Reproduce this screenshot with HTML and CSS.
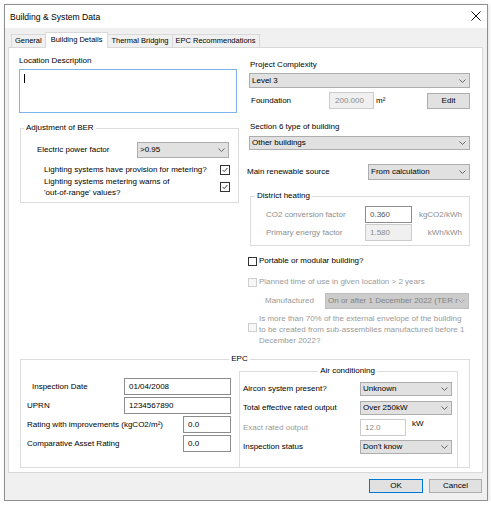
FILE: index.html
```html
<!DOCTYPE html>
<html lang="en">
<head>
<meta charset="UTF-8">
<title>Building &amp; System Data</title>
<link rel="stylesheet" href="styles.css">
</head>
<body>

<div class="dialog">
  <div class="titlebar">
    <span class="title">Building &amp; System Data</span>
    <svg class="close" viewBox="0 0 10 10"><path d="M0.5 0.5 L9.5 9.5 M9.5 0.5 L0.5 9.5"/></svg>
  </div>

  <div class="dialog-body">
    <ul class="tabs">
      <li class="tab">General</li>
      <li class="tab active">Building Details</li>
      <li class="tab">Thermal Bridging</li>
      <li class="tab">EPC Recommendations</li>
    </ul>

    <div class="panel">
      <div class="columns">

        <!-- left column -->
        <div class="col">
          <div class="caption">Location Description</div>
          <div class="memo"><span class="caret"></span></div>

          <fieldset class="group group-ber">
            <legend>Adjustment of BER</legend>
            <div class="ber-row">
              <span>Electric power factor</span>
              <div class="select select-power">
                <span>&gt;0.95</span>
                <svg class="chev" viewBox="0 0 7 4"><path d="M0.5 0.5 L3.5 3.5 L6.5 0.5"/></svg>
              </div>
            </div>
            <div class="ber-check">
              <span>Lighting systems have provision for metering?</span>
              <span class="check"><svg viewBox="0 0 10 10"><path d="M2 5 L4 7 L8 2.5"/></svg></span>
            </div>
            <div class="ber-check ber-check-2">
              <span>Lighting systems metering warns of<br>'out-of-range' values?</span>
              <span class="check"><svg viewBox="0 0 10 10"><path d="M2 5 L4 7 L8 2.5"/></svg></span>
            </div>
          </fieldset>
        </div>

        <!-- right column -->
        <div class="col">
          <div class="caption caption-first">Project Complexity</div>
          <div class="select select-wide">
            <span>Level 3</span>
            <svg class="chev" viewBox="0 0 7 4"><path d="M0.5 0.5 L3.5 3.5 L6.5 0.5"/></svg>
          </div>

          <div class="foundation">
            <span class="foundation-label">Foundation</span>
            <span class="field field-disabled field-area">200.000</span>
            <span class="unit-m2">m²</span>
            <span class="btn btn-edit">Edit</span>
          </div>

          <div class="caption caption-section">Section 6 type of building</div>
          <div class="select select-wide select-short">
            <span>Other buildings</span>
            <svg class="chev" viewBox="0 0 7 4"><path d="M0.5 0.5 L3.5 3.5 L6.5 0.5"/></svg>
          </div>

          <div class="renewable">
            <span class="renewable-label">Main renewable source</span>
            <div class="select select-renewable">
              <span>From calculation</span>
              <svg class="chev" viewBox="0 0 7 4"><path d="M0.5 0.5 L3.5 3.5 L6.5 0.5"/></svg>
            </div>
          </div>

          <fieldset class="group group-district">
            <legend>District heating</legend>
            <div class="factor-row">
              <span class="factor-label">CO2 conversion factor</span>
              <span class="field field-factor">0.360</span>
              <span class="factor-unit">kgCO2/kWh</span>
            </div>
            <div class="factor-row factor-row-2">
              <span class="factor-label">Primary energy factor</span>
              <span class="field field-factor field-disabled">1.580</span>
              <span class="factor-unit">kWh/kWh</span>
            </div>
          </fieldset>

          <div class="opt opt-portable">
            <span class="check check-sm"></span>
            <span>Portable or modular building?</span>
          </div>

          <div class="opt opt-planned is-disabled">
            <span class="check check-sm"></span>
            <span>Planned time of use in given location &gt; 2 years</span>
          </div>

          <div class="manufactured is-disabled">
            <span class="manufactured-label">Manufactured</span>
            <div class="select select-disabled select-manufactured">
              <span>On or after 1 December 2022 (TER r</span>
              <svg class="chev" viewBox="0 0 7 4"><path d="M0.5 0.5 L3.5 3.5 L6.5 0.5"/></svg>
            </div>
          </div>

          <div class="opt opt-envelope is-disabled">
            <span class="check check-sm"></span>
            <span>Is more than 70% of the external envelope of the building<br>to be created from sub-assemblies manufactured before 1<br>December 2022?</span>
          </div>
        </div>
      </div>

      <fieldset class="group group-epc">
        <legend>EPC</legend>
        <div class="epc-inner">
          <div class="epc-left">
            <div class="epc-row">
              <span class="epc-label-date">Inspection Date</span>
              <span class="field field-long">01/04/2008</span>
            </div>
            <div class="epc-row">
              <span>UPRN</span>
              <span class="field field-long">1234567890</span>
            </div>
            <div class="epc-row">
              <span>Rating with improvements (kgCO2/m²)</span>
              <span class="field field-short">0.0</span>
            </div>
            <div class="epc-row">
              <span>Comparative Asset Rating</span>
              <span class="field field-short">0.0</span>
            </div>
          </div>

          <fieldset class="group group-aircon">
            <legend>Air conditioning</legend>
            <div class="ac-row">
              <span class="ac-label">Aircon system present?</span>
              <div class="select select-ac">
                <span>Unknown</span>
                <svg class="chev" viewBox="0 0 7 4"><path d="M0.5 0.5 L3.5 3.5 L6.5 0.5"/></svg>
              </div>
            </div>
            <div class="ac-row ac-row-2">
              <span class="ac-label">Total effective rated output</span>
              <div class="select select-ac">
                <span>Over 250kW</span>
                <svg class="chev" viewBox="0 0 7 4"><path d="M0.5 0.5 L3.5 3.5 L6.5 0.5"/></svg>
              </div>
            </div>
            <div class="ac-row ac-row-exact is-disabled">
              <span class="ac-label">Exact rated output</span>
              <span class="field field-kw">12.0</span>
              <span class="kw">kW</span>
            </div>
            <div class="ac-row ac-row-4">
              <span class="ac-label">Inspection status</span>
              <div class="select select-ac">
                <span>Don't know</span>
                <svg class="chev" viewBox="0 0 7 4"><path d="M0.5 0.5 L3.5 3.5 L6.5 0.5"/></svg>
              </div>
            </div>
          </fieldset>
        </div>
      </fieldset>
    </div>

    <div class="buttons">
      <span class="btn btn-ok">OK</span>
      <span class="btn btn-cancel">Cancel</span>
    </div>
  </div>
</div>

</body>
</html>
```

FILE: styles.css
```css
body {
  margin: 0;
  background: #fff;
  font-family: "Liberation Sans", Arial, sans-serif;
  font-size: 8px;
  line-height: 10px;
  color: #000;
}

/* window frame */
.dialog {
  width: 484px;
  height: 497px;
  margin: 4px 0 0 4px;
  box-sizing: border-box;
  border: 1px solid #8f8f8f;
  box-shadow: 1px 1px 4px rgba(0,0,0,0.12);
  display: flex;
  flex-direction: column;
}

.titlebar {
  height: 23px;
  flex: none;
  background: #fff;
  display: flex;
  align-items: center;
  justify-content: space-between;
  padding: 0 6px 0 5px;
}
.title {
  font-size: 8.6px;
}
.close {
  width: 10px;
  height: 10px;
  margin-top: -2px;
  fill: none;
  stroke: #111;
  stroke-width: 1;
}

.dialog-body {
  flex: 1;
  background: #f0f0f0;
  padding: 4px 4px 0 3px;
  display: flex;
  flex-direction: column;
}

/* tab strip */
.tabs {
  list-style: none;
  margin: 0;
  padding: 0 0 0 3px;
  height: 15px;
  display: flex;
  align-items: flex-end;
  font-size: 7.5px;
}
.tab {
  box-sizing: border-box;
  height: 13px;
  line-height: 12px;
  padding: 0 3px;
  border: 1px solid #d9d9d9;
  border-bottom: 0;
  background: #f0f0f0;
  margin-left: -1px;
  white-space: nowrap;
}
.tab:first-child {
  margin-left: 0;
}
.tab.active {
  position: relative;
  height: 16px;
  line-height: 14px;
  margin-bottom: -1px;
  padding: 0 5px;
  background: #fff;
}

.panel {
  background: #fff;
  border: 1px solid #d9d9d9;
  padding: 8px 12px 4px 10px;
}

.columns {
  display: grid;
  grid-template-columns: 220px 221px;
  column-gap: 10px;
  align-items: start;
}
.col {
  display: flex;
  flex-direction: column;
}

/* shared controls */
.select {
  box-sizing: border-box;
  height: 16px;
  display: flex;
  align-items: center;
  justify-content: space-between;
  padding: 0 3px 0 2px;
  background: #e1e1e1;
  border: 1px solid #adadad;
  white-space: nowrap;
  overflow: hidden;
}
.chev {
  width: 7px;
  height: 4px;
  flex: none;
  fill: none;
  stroke: #666;
  stroke-width: 1;
}
.select-disabled {
  background: #cccccc;
  border-color: #bfbfbf;
  color: #838383;
}
.select-disabled .chev {
  stroke: #a8a8a8;
}

.field {
  box-sizing: border-box;
  height: 17px;
  display: flex;
  align-items: center;
  padding: 0 4px;
  background: #fff;
  border: 1px solid #8c8c8c;
  flex: none;
}
.field-disabled {
  background: #f0f0f0;
  border-color: #cccccc;
  color: #8a8a8a;
}

.check {
  box-sizing: border-box;
  width: 10px;
  height: 10px;
  flex: none;
  border: 1px solid #333;
  background: #fff;
  display: flex;
}
.check svg {
  width: 100%;
  height: 100%;
  fill: none;
  stroke: #222;
  stroke-width: 1.1;
}
.check-sm {
  width: 9px;
  height: 9px;
}

.btn {
  box-sizing: border-box;
  height: 14px;
  display: flex;
  align-items: center;
  justify-content: center;
  background: #e1e1e1;
  border: 1px solid #adadad;
}

.group {
  margin: 0;
  min-width: 0;
  padding: 0;
  border: 1px solid #dcdcdc;
}
.group legend {
  padding: 0 2px;
  line-height: 10px;
}

.is-disabled {
  color: #9a9a9a;
}
.is-disabled .check {
  border-color: #cfcfcf;
  background: #f7f7f7;
}

/* left column */
.memo {
  box-sizing: border-box;
  width: 218px;
  height: 44px;
  margin-top: 3px;
  padding: 4px 0 0 4px;
  border: 1px solid #7eb4ea;
  background: #fff;
}
.caret {
  display: block;
  width: 1px;
  height: 9px;
  background: #000;
}

.group-ber {
  margin: 10px 0 0 1px;
  padding: 0 9px 4px 3px;
}
.ber-row {
  height: 16px;
  margin-top: 9px;
  padding-left: 13px;
  display: flex;
  align-items: center;
  justify-content: space-between;
}
.select-power {
  width: 92px;
}
.ber-check {
  margin-top: 6px;
  padding-left: 20px;
  line-height: 11px;
  display: flex;
  align-items: center;
  justify-content: space-between;
}
.ber-check .check {
  margin-right: -1px;
}
.ber-check-2 {
  margin-top: 1px;
}

/* right column */
.caption-first {
  margin-top: 4px;
  padding-left: 1px;
}
.select-wide {
  height: 15px;
  margin-top: 3px;
}
.foundation {
  height: 17px;
  margin-top: 4px;
  display: flex;
  align-items: center;
}
.foundation-label {
  width: 78px;
  padding-left: 2px;
}
.field-area {
  width: 45px;
  padding-left: 5px;
}
.unit-m2 {
  margin-left: 2px;
}
.btn-edit {
  width: 43px;
  height: 16px;
  margin-left: auto;
}
.caption-section {
  margin-top: 13px;
  padding-left: 1px;
}
.select-short {
  height: 14px;
  margin-top: 4px;
}
.renewable {
  height: 16px;
  margin-top: 14px;
  display: flex;
  align-items: center;
  justify-content: space-between;
}
.renewable-label {
  margin-left: -2px;
}
.select-renewable {
  width: 102px;
}

.group-district {
  margin: 11px 0 0 1px;
  padding: 0 0 4px 4px;
}
.factor-row {
  margin-top: 5px;
  padding-left: 11px;
  display: flex;
  align-items: center;
  color: #8d8d8d;
}
.factor-row-2 {
  margin-top: 1px;
}
.factor-label {
  width: 99px;
}
.field-factor {
  width: 47px;
  color: #555;
}
.field-factor.field-disabled {
  color: #8a8a8a;
}
.factor-unit {
  width: 44px;
  margin-left: 6px;
  text-align: right;
}

.opt {
  display: flex;
  align-items: center;
  gap: 2px;
  margin-left: -1px;
  white-space: nowrap;
}
.opt-portable {
  margin-top: 10px;
}
.opt-planned {
  margin-top: 11px;
}
.opt-envelope {
  margin-top: 4px;
  line-height: 11px;
  align-items: flex-start;
}
.opt-envelope .check {
  margin-top: 10px;
}

.manufactured {
  height: 16px;
  margin-top: 6px;
  padding-left: 16px;
  display: flex;
  align-items: center;
}
.manufactured-label {
  width: 60px;
}
.select-manufactured {
  width: 144px;
}

/* EPC block */
.group-epc {
  margin: 8px 0 0 1px;
  padding: 0 11px 0 0;
}
.group-epc > legend,
.group-aircon > legend {
  margin: 0 auto;
}
.epc-inner {
  display: flex;
}
.epc-left {
  width: 218px;
  margin-top: 14px;
  padding: 0 8px 0 6px;
  box-sizing: border-box;
}
.epc-row {
  height: 17px;
  margin-bottom: 2px;
  display: flex;
  align-items: center;
  justify-content: space-between;
  white-space: nowrap;
}
.epc-label-date {
  padding-left: 5px;
}
.field-long {
  width: 107px;
}
.field-short {
  width: 48px;
}

.group-aircon {
  width: 219px;
  box-sizing: border-box;
  margin-top: 2px;
  padding: 0 5px 13px 3px;
  border-bottom: 0;
}
.ac-row {
  height: 14px;
  margin-top: 6px;
  display: flex;
  align-items: center;
}
.ac-row-2 {
  margin-top: 5px;
}
.ac-row-exact {
  height: 17px;
  margin-top: 4px;
}
.ac-row-4 {
  margin-top: 4px;
}
.ac-label {
  width: 117px;
}
.select-ac {
  width: 92px;
  height: 14px;
}
.field-kw {
  width: 46px;
  color: #8a8a8a;
  border-color: #cccccc;
}
.kw {
  align-self: flex-start;
  margin-left: 6px;
  color: #000;
}

/* bottom buttons */
.buttons {
  display: flex;
  justify-content: flex-end;
  gap: 6px;
  margin-top: 6px;
  padding-right: 1px;
}
.btn-ok {
  width: 54px;
  border-color: #0078d7;
}
.btn-cancel {
  width: 53px;
}
```
